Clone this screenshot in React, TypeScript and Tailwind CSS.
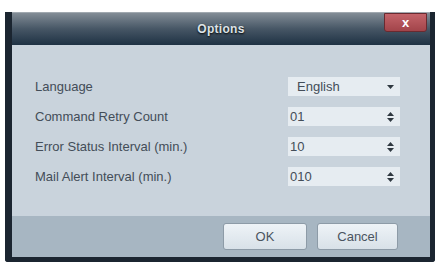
import React from "react";

const rows = [
  { label: "Language", value: "English", kind: "select" },
  { label: "Command Retry Count", value: "01", kind: "spin" },
  { label: "Error Status Interval (min.)", value: "10", kind: "spin" },
  { label: "Mail Alert Interval (min.)", value: "010", kind: "spin" },
];

function Caret() {
  return (
    <svg width="7" height="4" viewBox="0 0 7 4">
      <path d="M0 0h7L3.5 4z" fill="#2f3840" />
    </svg>
  );
}

function Spin() {
  return (
    <svg width="7" height="10" viewBox="0 0 7 10">
      <path d="M0 4h7L3.5 0z" fill="#2f3840" />
      <path d="M0 6h7L3.5 10z" fill="#2f3840" />
    </svg>
  );
}

export default function App() {
  return (
    <div
      className="w-[439px] h-[265px] bg-white pt-[12px] pl-[5px]"
      style={{ fontFamily: '"Liberation Sans", Arial, sans-serif' }}
    >
      <div className="w-[430px] h-[250px] flex flex-col bg-[#1c2833] border-l-[7px] border-r-[5px] border-b-[5px] border-[#1b2530] rounded-b-[3px]">
        {/* title bar */}
        <div className="relative h-[33px] shrink-0 bg-gradient-to-b from-[#838d96] via-[#465665] to-[#1f3244] border-t border-[#a1a9b0] flex items-center justify-center">
          <span className="text-[12px] font-bold text-[#dde2e6] tracking-[0.3px] [text-shadow:0_1px_2px_#000]">
            Options
          </span>
          <div className="absolute right-[3px] top-0 w-[43px] h-[19px] rounded-b-[3px] bg-gradient-to-b from-[#c4646a] to-[#a2444a] border border-[#6a2a30] flex items-center justify-center">
            <span className="text-[13px] font-bold text-white leading-none">x</span>
          </div>
        </div>

        {/* body */}
        <div className="flex-1 bg-[#c9d3dc] flex flex-col pt-[32px] pl-[23px] pr-[30px] gap-[11px]">
          {rows.map((r) => (
            <div key={r.label} className="flex items-center justify-between h-[19px]">
              <span className="text-[13px] text-[#434d58]">{r.label}</span>
              <div
                className={`w-[112px] h-[19px] bg-[#e6ecf1] flex items-center justify-between pr-[6px] ${
                  r.kind === "select" ? "pl-[9px]" : "pl-[2px]"
                }`}
              >
                <span className="text-[13px] text-[#434d58]">{r.value}</span>
                {r.kind === "select" ? <Caret /> : <Spin />}
              </div>
            </div>
          ))}
        </div>

        {/* footer */}
        <div className="h-[41px] shrink-0 bg-[#a7b6c2] flex items-center justify-end gap-[10px] pr-[32px]">
          <button className="w-[84px] h-[27px] rounded-[3px] border border-[#8d9ba7] bg-gradient-to-b from-[#eef3f7] to-[#d8e1e8] text-[13px] text-[#4a545f]">
            OK
          </button>
          <button className="w-[81px] h-[27px] rounded-[3px] border border-[#8d9ba7] bg-gradient-to-b from-[#eef3f7] to-[#d8e1e8] text-[13px] text-[#4a545f]">
            Cancel
          </button>
        </div>
      </div>
    </div>
  );
}
